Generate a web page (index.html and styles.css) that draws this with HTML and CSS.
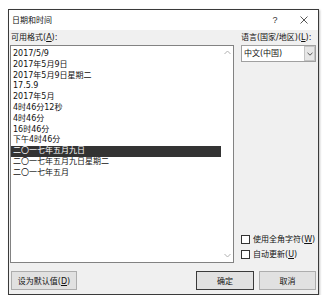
FILE: index.html
```html
<!DOCTYPE html>
<html lang="zh">
<head>
<meta charset="utf-8">
<link rel="stylesheet" href="styles.css">
</head>
<body>
<div class="dialog">
  <div class="titlebar">
    <span class="title">日期和时间</span>
    <span class="tb-btn help">?</span>
    <span class="tb-btn close">
      <svg width="8" height="8" viewBox="0 0 8 8"><path d="M0.5 0.5L7.5 7.5M7.5 0.5L0.5 7.5" stroke="#444" stroke-width="0.9" fill="none"/></svg>
    </span>
  </div>
  <div class="body">
    <div class="main">
      <div class="left">
        <div class="label">可用格式(<u>A</u>):</div>
        <div class="listbox">
          <ul class="items">
            <li>2017/5/9</li>
            <li>2017年5月9日</li>
            <li>2017年5月9日星期二</li>
            <li>17.5.9</li>
            <li>2017年5月</li>
            <li>4时46分12秒</li>
            <li>4时46分</li>
            <li>16时46分</li>
            <li>下午4时46分</li>
            <li class="sel">二〇一七年五月九日</li>
            <li>二〇一七年五月九日星期二</li>
            <li>二〇一七年五月</li>
          </ul>
          <div class="scroll">
            <svg width="7" height="5" viewBox="0 0 7 5"><path d="M0.5 4L3.5 1L6.5 4" stroke="#b0b0b0" fill="none"/></svg>
            <svg width="7" height="5" viewBox="0 0 7 5"><path d="M0.5 1L3.5 4L6.5 1" stroke="#b0b0b0" fill="none"/></svg>
          </div>
        </div>
      </div>
      <div class="right">
        <div class="label">语言(国家/地区)(<u>L</u>):</div>
        <div class="select">
          <span class="sel-text">中文(中国)</span>
          <span class="sel-btn"><svg width="6" height="4" viewBox="0 0 6 4"><path d="M0.5 0.8L3 3.2L5.5 0.8" stroke="#555" fill="none"/></svg></span>
        </div>
        <div class="spacer"></div>
        <label class="check"><span class="box"></span><span>使用全角字符(<u>W</u>)</span></label>
        <label class="check"><span class="box"></span><span>自动更新(<u>U</u>)</span></label>
      </div>
    </div>
    <div class="footer">
      <button class="btn default">设为默认值(<u>D</u>)</button>
      <div class="gap"></div>
      <button class="btn ok">确定</button>
      <button class="btn cancel">取消</button>
    </div>
  </div>
</div>
</body>
</html>
```

FILE: styles.css
```css
html, body {
  margin: 0;
  padding: 0;
  background: #fff;
}
body {
  padding: 9px 0 0 8px;
  font-family: "DejaVu Sans", "Noto Sans CJK SC", sans-serif;
  font-size: 8px;
  line-height: 11px;
  color: #111;
}
.dialog {
  width: 309px;
  height: 284px;
  border: 1px solid #3a3a3a;
  background: #f0f0f0;
  display: flex;
  flex-direction: column;
  box-shadow: 1px 1px 2px rgba(0,0,0,0.25);
}
.titlebar {
  height: 20px;
  background: #fff;
  display: flex;
  align-items: center;
  padding-left: 3px;
  box-sizing: border-box;
}
.title {
  flex: 1;
}
.tb-btn {
  width: 30px;
  color: #333;
  display: flex;
  justify-content: center;
}
.help { font-size: 9px; font-family: "Liberation Sans", sans-serif; }
.close { width: 28px; }
.body {
  flex: 1;
  display: flex;
  flex-direction: column;
  padding: 2px 2px 4px 1px;
}
.main {
  flex: 1;
  display: flex;
  gap: 7px;
}
.left {
  width: 224px;
  flex-shrink: 0;
  display: flex;
  flex-direction: column;
}
.label {
  height: 13px;
  line-height: 12px;
  padding-left: 1px;
  white-space: nowrap;
}
.right .label { padding-left: 0; }
.listbox {
  flex: 1;
  background: #fff;
  border: 1px solid #828282;
  display: flex;
}
.items {
  list-style: none;
  margin: 0;
  padding: 3px 0 0 0;
  flex: 1;
}
.items li {
  height: 10.8px;
  line-height: 10.8px;
  padding-left: 2px;
  white-space: nowrap;
}
.items li.sel {
  background: #333;
  color: #fff;
}
.scroll {
  width: 12px;
  display: flex;
  flex-direction: column;
  justify-content: space-between;
  align-items: center;
  padding: 4px 0 4px;
}
.right {
  width: 75px;
  display: flex;
  flex-direction: column;
}
.select {
  height: 17px;
  box-sizing: border-box;
  border: 1px solid #a0a0a0;
  background: #fff;
  display: flex;
  align-items: center;
}
.sel-text {
  flex: 1;
  padding-left: 2px;
}
.sel-btn {
  width: 11px;
  height: 15px;
  box-sizing: border-box;
  background: #e6e6e6;
  border: 1px solid #c4c4c4;
  display: flex;
  align-items: center;
  justify-content: center;
}
.spacer { flex: 1; }
.check {
  display: flex;
  align-items: center;
  height: 15px;
  gap: 3px;
  white-space: nowrap;
}
.check:last-child { margin-bottom: 1px; }
.box {
  width: 9px;
  height: 9px;
  box-sizing: border-box;
  border: 1px solid #333;
  background: #fff;
}
.footer {
  display: flex;
  align-items: center;
  padding-top: 8px;
  padding-left: 1px;
  gap: 5px;
}
.gap { flex: 1; }
.btn {
  font-family: inherit;
  font-size: 8px;
  height: 19px;
  padding: 0;
  background: #e1e1e1;
  border: 1px solid #adadad;
  color: #111;
  width: 57px;
}
.btn.default { width: 66px; }
.btn.ok { width: 58px; border-color: #3a3a3a; }
u { text-decoration: underline; }
```
